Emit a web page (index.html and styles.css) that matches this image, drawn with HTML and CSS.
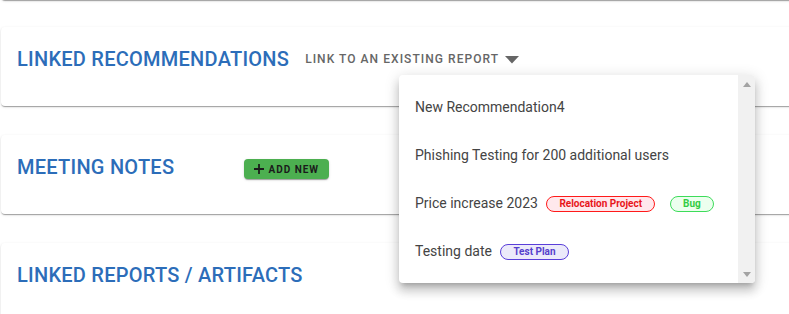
FILE: index.html
```html
<!DOCTYPE html>
<html>
<head>
<meta charset="utf-8">
<link rel="stylesheet" href="styles.css">
</head>
<body>
<div class="page">
  <div class="card card-prev"></div>

  <div class="card">
    <h2 class="title">LINKED RECOMMENDATIONS</h2>
    <div class="link-select">
      <span>LINK TO AN EXISTING REPORT</span>
      <svg class="caret" width="14" height="8" viewBox="0 0 14 8"><path d="M0 0 H14 L7 7.5 Z" fill="#666"/></svg>
    </div>
  </div>

  <div class="card">
    <h2 class="title">MEETING NOTES</h2>
    <button class="add-btn">
      <svg width="10" height="10" viewBox="0 0 10 10"><path d="M5 0 V10 M0 5 H10" stroke="#1b1b1b" stroke-width="1.8"/></svg>
      <span>ADD NEW</span>
    </button>
  </div>

  <div class="card card-last">
    <h2 class="title">LINKED REPORTS / ARTIFACTS</h2>
  </div>

  <div class="menu">
    <ul class="menu-list">
      <li class="item">New Recommendation4</li>
      <li class="item">Phishing Testing for 200 additional users</li>
      <li class="item">Price increase 2023 <span class="chip chip-red">Relocation Project</span><span class="chip chip-green">Bug</span></li>
      <li class="item">Testing date <span class="chip chip-purple">Test Plan</span></li>
    </ul>
    <div class="scrollbar">
      <svg width="8" height="5" viewBox="0 0 8 5"><path d="M0 5 L4 0 L8 5 Z" fill="#a3a3a3"/></svg>
      <svg width="8" height="5" viewBox="0 0 8 5"><path d="M0 0 L8 0 L4 5 Z" fill="#a3a3a3"/></svg>
    </div>
  </div>
</div>
</body>
</html>
```

FILE: styles.css
```css
html, body {
  margin: 0;
  padding: 0;
  background: #fff;
  overflow: hidden;
}
body {
  font-family: Roboto, "Liberation Sans", sans-serif;
}
.page {
  position: relative;
  width: 789px;
  height: 314px;
  overflow: hidden;
  padding-left: 1px;
  box-sizing: border-box;
}
.card {
  background: #fff;
  border-radius: 4px;
  box-shadow: 0 2px 1px -1px rgba(0,0,0,0.2), 0 1px 1px 0 rgba(0,0,0,0.14), 0 1px 3px 0 rgba(0,0,0,0.12);
  margin-right: -30px;
  height: 79px;
  box-sizing: border-box;
  padding: 20px 16px 0 16px;
  display: flex;
  align-items: flex-start;
  margin-bottom: 29px;
}
.card-prev {
  height: 20px;
  margin-top: -20px;
  margin-bottom: 27px;
  padding: 0;
}
.card-last {
  height: 120px;
}
.title {
  margin: 0;
  font-size: 20px;
  font-weight: 500;
  line-height: 24px;
  color: #2c6db9;
  letter-spacing: 0.25px;
}
.link-select {
  display: flex;
  align-items: center;
  margin-left: 16px;
  height: 24px;
  color: #666;
  font-size: 12px;
  font-weight: 500;
  letter-spacing: 1.05px;
}
.caret {
  margin-left: 6px;
  margin-top: 1px;
}
.add-btn {
  margin: 4px 0 0 70px;
  height: 20px;
  width: 85px;
  border: none;
  border-radius: 4px;
  background: #4caf50;
  box-shadow: 0 2px 1px -1px rgba(0,0,0,0.2), 0 1px 1px 0 rgba(0,0,0,0.14), 0 1px 3px 0 rgba(0,0,0,0.12);
  display: flex;
  align-items: center;
  justify-content: center;
  gap: 4px;
  padding: 0;
  font-family: Roboto, "Liberation Sans", sans-serif;
  font-size: 10px;
  font-weight: 700;
  letter-spacing: 1px;
  color: #1b1b1b;
}
.menu {
  position: absolute;
  left: 399px;
  top: 75px;
  width: 356px;
  height: 208px;
  background: #fff;
  border-radius: 4px;
  overflow: hidden;
  display: flex;
  box-shadow: 0 5px 5px -3px rgba(0,0,0,0.2), 0 8px 10px 1px rgba(0,0,0,0.14), 0 3px 14px 2px rgba(0,0,0,0.12);
}
.menu-list {
  list-style: none;
  margin: 0;
  padding: 8px 0;
  flex: 1;
}
.item {
  height: 48px;
  display: flex;
  align-items: center;
  padding-left: 16px;
  font-size: 14px;
  color: #444;
  white-space: pre;
}
.chip {
  display: inline-flex;
  align-items: center;
  height: 16px;
  box-sizing: border-box;
  border: 1px solid;
  border-radius: 9px;
  padding: 0 12px;
  font-size: 10px;
  font-weight: 700;
  margin-left: 5px;
  margin-top: 1px;
}
.chip-red {
  border-color: #ff1a1a;
  background: #ffe8ec;
  color: #e8151a;
}
.chip-green {
  margin-left: 15px;
  border-color: #3ddc5a;
  background: #ecffee;
  color: #33cc44;
}
.chip-purple {
  border-color: #5a3fd9;
  background: #eceafa;
  color: #5540cc;
}
.scrollbar {
  width: 17px;
  background: #f1f1f1;
  display: flex;
  flex-direction: column;
  justify-content: space-between;
  align-items: center;
  padding: 7px 0 6px;
  box-sizing: border-box;
}
```
